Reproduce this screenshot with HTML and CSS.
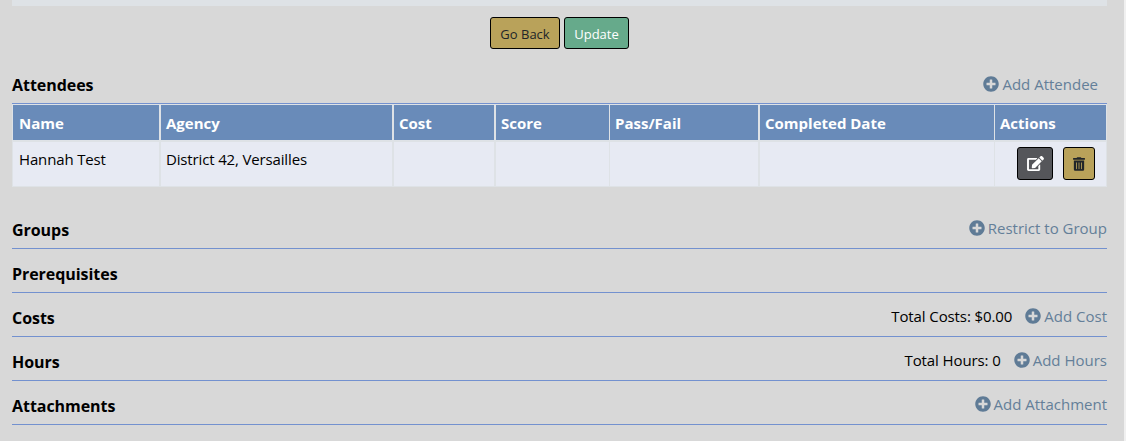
FILE: index.html
```html
<!DOCTYPE html>
<html lang="en">
<head>
  <meta charset="UTF-8" />
  <title>Class Details</title>
  <link rel="stylesheet" href="styles.css">
</head>
<body>
  <!-- Shared icons -->
  <svg class="sprite" width="0" height="0">
    <symbol id="plus" viewBox="0 0 512 512">
      <path d="M256 8C119 8 8 119 8 256s111 248 248 248 248-111 248-248S393 8 256 8zm144 276c0 6.600-5.400 12-12 12h-92v92c0 6.600-5.400 12-12 12h-56c-6.600 0-12-5.400-12-12v-92h-92c-6.600 0-12-5.400-12-12v-56c0-6.600 5.400-12 12-12h92v-92c0-6.600 5.400-12 12-12h56c6.600 0 12 5.400 12 12v92h92c6.600 0 12 5.400 12 12v56z"/>
    </symbol>
    <symbol id="edit" viewBox="0 0 576 512">
      <path d="M402.600 83.200l90.200 90.200c3.800 3.800 3.800 10 0 13.800L274.400 405.600l-92.800 10.300c-12.400 1.400-22.900-9.100-21.500-21.500l10.300-92.800L388.800 83.200c3.800-3.800 10-3.800 13.800 0zm162-22.900l-48.800-48.800c-15.200-15.200-39.900-15.200-55.200 0l-35.400 35.400c-3.800 3.800-3.800 10 0 13.800l90.200 90.200c3.800 3.800 10 3.800 13.800 0l35.400-35.400c15.200-15.300 15.200-40 0-55.200zM384 346.200V448H64V128h229.800c3.200 0 6.200-1.300 8.500-3.500l40-40c7.600-7.600 2.200-20.500-8.500-20.500H48C21.500 64 0 85.500 0 112v352c0 26.500 21.500 48 48 48h352c26.500 0 48-21.500 48-48V306.200c0-10.700-12.900-16-20.500-8.500l-40 40c-2.200 2.300-3.500 5.300-3.500 8.500z"/>
    </symbol>
    <symbol id="trash" viewBox="0 0 448 512">
      <path d="M32 464a48 48 0 0 0 48 48h288a48 48 0 0 0 48-48V128H32zm272-256a16 16 0 0 1 32 0v224a16 16 0 0 1-32 0zm-96 0a16 16 0 0 1 32 0v224a16 16 0 0 1-32 0zm-96 0a16 16 0 0 1 32 0v224a16 16 0 0 1-32 0zM432 32H312l-9.400-18.700A24 24 0 0 0 281.100 0H166.800a23.700 23.700 0 0 0-21.400 13.300L136 32H16A16 16 0 0 0 0 48v32a16 16 0 0 0 16 16h416a16 16 0 0 0 16-16V48a16 16 0 0 0-16-16z"/>
    </symbol>
  </svg>

  <div class="page">
    <div class="panel-end"></div>

    <div class="form-buttons">
      <button class="btn btn-gold btn-text">Go Back</button>
      <button class="btn btn-green btn-text">Update</button>
    </div>

    <!-- Attendees -->
    <div class="section attendees">
      <h2>Attendees</h2>
      <a class="add-link"><svg class="icon"><use href="#plus"/></svg><span>Add Attendee</span></a>
    </div>

    <table>
      <colgroup>
        <col class="col-name">
        <col class="col-agency">
        <col class="col-cost">
        <col class="col-score">
        <col class="col-pass">
        <col class="col-date">
        <col class="col-actions">
      </colgroup>
      <thead>
        <tr>
          <th>Name</th>
          <th>Agency</th>
          <th>Cost</th>
          <th>Score</th>
          <th class="thin">Pass/Fail</th>
          <th>Completed Date</th>
          <th class="thin">Actions</th>
        </tr>
      </thead>
      <tbody>
        <tr>
          <td>Hannah Test</td>
          <td>District 42, Versailles</td>
          <td></td>
          <td></td>
          <td class="thin"></td>
          <td></td>
          <td class="thin">
            <div class="actions">
              <button class="btn btn-dark" aria-label="Edit"><svg class="icon-edit"><use href="#edit"/></svg></button>
              <button class="btn btn-gold btn-trash" aria-label="Delete"><svg class="icon-trash"><use href="#trash"/></svg></button>
            </div>
          </td>
        </tr>
      </tbody>
    </table>

    <!-- Other sections -->
    <div class="section groups">
      <h2>Groups</h2>
      <a class="add-link"><svg class="icon"><use href="#plus"/></svg><span>Restrict to Group</span></a>
    </div>
    <div class="section">
      <h2>Prerequisites</h2>
    </div>
    <div class="section">
      <h2>Costs</h2>
      <span class="total">Total Costs: $0.00</span>
      <a class="add-link"><svg class="icon"><use href="#plus"/></svg><span>Add Cost</span></a>
    </div>
    <div class="section">
      <h2>Hours</h2>
      <span class="total">Total Hours: 0</span>
      <a class="add-link"><svg class="icon"><use href="#plus"/></svg><span>Add Hours</span></a>
    </div>
    <div class="section">
      <h2>Attachments</h2>
      <a class="add-link"><svg class="icon"><use href="#plus"/></svg><span>Add Attachment</span></a>
    </div>
  </div>
</body>
</html>
```
FILE: styles.css
```css
* {
  box-sizing: border-box;
}

body {
  margin: 0;
  height: 441px;
  overflow: hidden;
  background: #f0f0f0;
  font-family: "Segoe UI", "Open Sans", sans-serif;
  font-size: 15px;
  line-height: 24px;
  color: #000;
}

.sprite {
  display: none;
}

.page {
  width: 1124px;
  height: 441px;
  padding: 0 17px 0 12px;
  background: #d8d8d8;
}

/* Bottom edge of the form above */
.panel-end {
  height: 6px;
  background: #dee2e6;
}

/* Buttons */
.form-buttons {
  display: flex;
  justify-content: center;
  gap: 4px;
  height: 55px;
  padding-top: 11px;
}

.btn {
  display: flex;
  align-items: center;
  justify-content: center;
  width: 70px;
  height: 32px;
  padding: 0;
  border: 1px solid #000;
  border-radius: 3px;
  font-family: inherit;
  font-size: 13px;
  line-height: 21px;
  cursor: pointer;
}

.btn-text {
  padding-top: 2px;
}

.btn-gold {
  background: #b9a25a;
  color: #212529;
}

.btn-green {
  width: 65px;
  background: #66aa8b;
  color: #fff;
}

.btn-dark {
  width: 36px;
  height: 33px;
  background: #55565a;
  color: #fff;
}

.btn-trash {
  width: 32px;
  height: 33px;
}

/* Section headings */
.section {
  display: flex;
  align-items: center;
  height: 44px;
  padding-top: 6px;
  border-bottom: 1px solid #7391cf;
}

.section h2 {
  flex: 1;
  margin: 0;
  font-size: 16px;
  font-weight: 700;
  letter-spacing: -0.05px;
}

.attendees {
  height: 43px;
}

.attendees .add-link {
  margin-right: 9px;
}

.groups {
  height: 62px;
  padding-top: 24px;
}

.total {
  margin: -3px 13px 0 0;
  letter-spacing: -0.1px;
}

.add-link {
  display: flex;
  align-items: center;
  gap: 3px;
  margin-top: -3px;
  color: #647f99;
}

.icon {
  width: 16px;
  height: 16px;
  fill: #5f7b96;
}

/* Attendee table */
table {
  width: 1095px;
  table-layout: fixed;
  border-collapse: separate;
  border-spacing: 0;
}

.col-name { width: 148px; }
.col-agency { width: 233px; }
.col-cost { width: 102px; }
.col-score { width: 115px; }
.col-pass { width: 149px; }
.col-date { width: 236px; }
.col-actions { width: 112px; }

th,
td {
  padding: 5px;
  border: 1px solid #dee2e6;
  text-align: left;
  vertical-align: top;
}

th {
  height: 37px;
  padding-top: 6px;
  background: #698bb9;
  color: #fff;
  font-weight: 700;
}

td {
  height: 46px;
  background: #e7eaf3;
  letter-spacing: -0.15px;
}

th:first-child,
td:first-child {
  padding-left: 6px;
}

.thin {
  border-left: 0;
}

.actions {
  display: flex;
  justify-content: flex-end;
  gap: 10px;
  padding-right: 6px;
}

.icon-edit {
  width: 17px;
  height: 15px;
  fill: #fff;
}

.icon-trash {
  width: 12px;
  height: 14px;
  fill: #212529;
}
```
